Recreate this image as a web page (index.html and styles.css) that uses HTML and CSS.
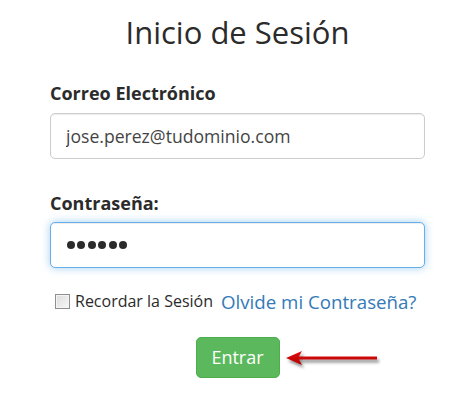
FILE: index.html
```html
<!DOCTYPE html>
<html lang="es">
<head>
<meta charset="utf-8">
<title>Inicio de Sesión</title>
<link rel="stylesheet" href="styles.css">
</head>
<body>
<main class="page">
  <h1 class="title">Inicio de Sesión</h1>
  <form class="login">
    <label class="field-label" for="email">Correo Electrónico</label>
    <input class="field" id="email" type="text" value="jose.perez@tudominio.com">
    <label class="field-label second" for="pass">Contraseña:</label>
    <div class="field focused" id="pass">
      <span class="dot"></span><span class="dot"></span><span class="dot"></span><span class="dot"></span><span class="dot"></span><span class="dot"></span>
    </div>
    <div class="options">
      <label class="remember"><input class="check" type="checkbox">Recordar la Sesión</label>
      <a class="forgot" href="#">Olvide mi Contraseña?</a>
    </div>
    <div class="actions">
      <div class="btn-wrap">
        <button class="btn" type="button">Entrar</button>
        <svg class="arrow" width="100" height="24" viewBox="0 0 100 24">
          <defs>
            <linearGradient id="ag" x1="0" y1="0" x2="0" y2="1">
              <stop offset="0" stop-color="#e01010"/>
              <stop offset="1" stop-color="#b80000"/>
            </linearGradient>
          </defs>
          <path d="M2 12 L18 5 L15 10.5 L93 10.5 L93 13.5 L15 13.5 L18 19 Z" fill="url(#ag)"/>
        </svg>
      </div>
    </div>
  </form>
</main>
</body>
</html>
```
FILE: styles.css
```css
* { box-sizing: border-box; }
html, body { margin: 0; padding: 0; background: #fff; }
body {
  font-family: "Open Sans", "Liberation Sans", sans-serif;
  color: #333;
  font-size: 16px;
}
.page {
  padding: 0 48px 0 50px;
}
.title {
  margin: 16px 0 0;
  font-size: 31px;
  line-height: 33px;
  font-weight: 500;
  text-align: center;
  color: #2b2b2b;
}
.login {
  display: flex;
  flex-direction: column;
}
.field-label {
  display: block;
  margin-top: 32px;
  font-size: 18px;
  line-height: 24px;
  font-weight: 700;
  color: #2b2b2b;
}
.field-label.second { margin-top: 32px; }
.field {
  display: flex;
  align-items: center;
  width: 375px;
  height: 46px;
  margin-top: 8px;
  padding: 10px 15px;
  font-family: inherit;
  font-size: 17.6px;
  color: #444;
  border: 1px solid #ccc;
  border-radius: 5px;
  background: #fff;
  box-shadow: inset 0 1px 1px rgba(0,0,0,.075);
  outline: none;
}
.field.focused {
  margin-top: 7px;
  gap: 2.4px;
  padding-left: 16px;
  border-color: #66afe9;
  box-shadow: inset 0 1px 1px rgba(0,0,0,.075), 0 0 8px rgba(102,175,233,.6);
}
.dot {
  width: 8px;
  height: 8px;
  border-radius: 50%;
  background: #2b2b2b;
}
.options {
  display: flex;
  align-items: baseline;
  gap: 8px;
  margin-top: 21px;
  padding-left: 5px;
  line-height: 24px;
}
.remember {
  display: flex;
  align-items: center;
  gap: 5px;
  font-size: 16px;
  color: #2b2b2b;
}
.check {
  appearance: none;
  -webkit-appearance: none;
  margin: 0;
  width: 15px;
  height: 15px;
  border: 1px solid #8f8f8f;
  background: linear-gradient(135deg, #dcdcdc, #f7f7f7);
  box-shadow: inset 0 0 0 1px #f4f4f4;
}
.forgot {
  font-size: 18.7px;
  color: #337ab7;
  text-decoration: none;
}
.actions {
  display: flex;
  justify-content: center;
  margin-top: 23px;
}
.btn-wrap {
  position: relative;
}
.btn {
  width: 84px;
  height: 41px;
  padding: 0;
  font-family: inherit;
  font-size: 18px;
  color: #fff;
  background: #5cb85c;
  border: 1px solid #4cae4c;
  border-radius: 5px;
}
.arrow {
  position: absolute;
  left: 88px;
  top: 9px;
  filter: drop-shadow(2px 3px 1.5px rgba(0,0,0,.45));
}
```
